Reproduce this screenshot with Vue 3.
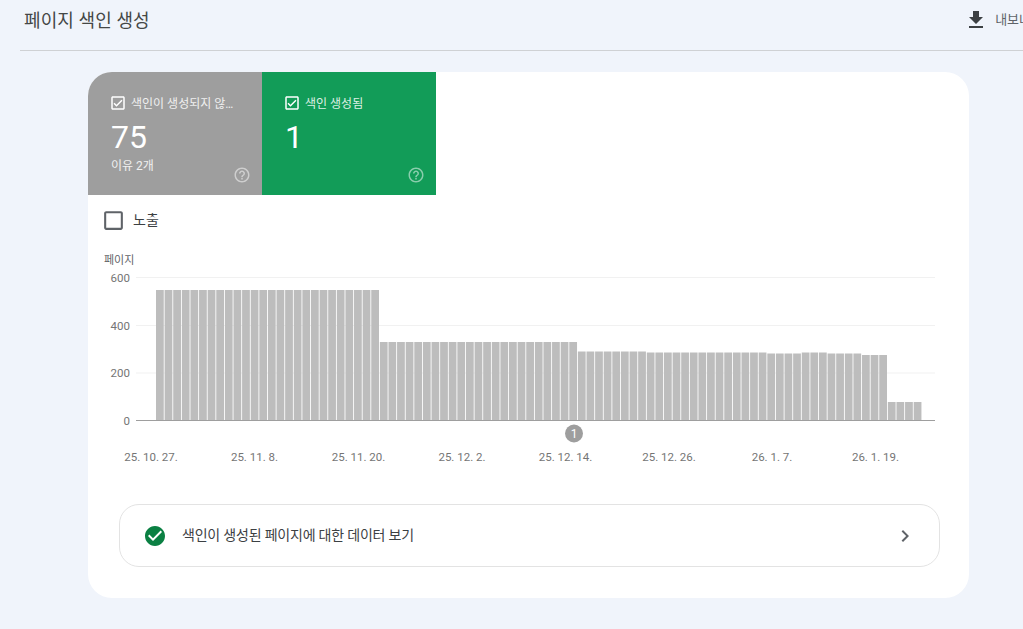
<template>
  <div class="page">
    <header class="page-header">
      <h1 class="page-title">페이지 색인 생성</h1>
      <button class="export-btn">
        <svg width="24" height="24" viewBox="0 0 24 24"><path d="M19 9h-4V3H9v6H5l7 7 7-7zM5 18v2h14v-2H5z" /></svg>
        <span>내보내기</span>
      </button>
    </header>

    <section class="card">
      <div class="tabs">
        <div v-for="tab in tabs" :key="tab.label" class="tab" :class="tab.kind">
          <div class="tab-label">
            <svg width="18" height="18" viewBox="0 0 24 24">
              <path d="M19 3H5c-1.11 0-2 .9-2 2v14c0 1.1.89 2 2 2h14c1.11 0 2-.9 2-2V5c0-1.1-.89-2-2-2zm0 16H5V5h14v14zM17.99 9l-1.41-1.42-6.59 6.59-2.58-2.57-1.42 1.41 4 3.99z" />
            </svg>
            <span class="tab-text">{{ tab.label }}</span>
          </div>
          <div class="tab-value">{{ tab.value }}</div>
          <div v-if="tab.sub" class="tab-sub">{{ tab.sub }}</div>
          <svg class="tab-help" width="18" height="18" viewBox="0 0 24 24">
            <path d="M11 18h2v-2h-2v2zm1-16C6.48 2 2 6.48 2 12s4.48 10 10 10 10-4.48 10-10S17.52 2 12 2zm0 18c-4.41 0-8-3.59-8-8s3.59-8 8-8 8 3.59 8 8-3.59 8-8 8zm0-14c-2.21 0-4 1.79-4 4h2c0-1.1.9-2 2-2s2 .9 2 2c0 2-3 1.75-3 5h2c0-2.25 3-2.5 3-5 0-2.21-1.79-4-4-4z" />
          </svg>
        </div>
      </div>

      <label class="metric">
        <svg width="25" height="25" viewBox="0 0 24 24">
          <path d="M19 5v14H5V5h14m0-2H5c-1.1 0-2 .9-2 2v14c0 1.1.9 2 2 2h14c1.1 0 2-.9 2-2V5c0-1.1-.9-2-2-2z" />
        </svg>
        <span>노출</span>
      </label>

      <svg class="chart" width="881" height="225" viewBox="0 0 881 225">
        <text x="16" y="18.5" class="unit">페이지</text>
        <g v-for="tick in ticks" :key="tick.label">
          <line x1="48" x2="847" :y1="tick.y" :y2="tick.y" class="grid" />
          <text x="42" :y="tick.y + 4" text-anchor="end" class="axis">{{ tick.label }}</text>
        </g>
        <rect
          v-for="bar in bars"
          :key="bar.x"
          :x="bar.x"
          :y="bar.y"
          width="7.75"
          :height="bar.h"
          class="bar"
        />
        <line x1="48" x2="847" y1="175.5" y2="175.5" class="baseline" />
        <circle cx="486" cy="188.5" r="9" class="marker" />
        <text x="486" y="193" text-anchor="middle" class="marker-text">1</text>
        <text v-for="d in dates" :key="d.label" :x="d.x" y="216" text-anchor="middle" class="axis">{{ d.label }}</text>
      </svg>

      <div class="detail-link">
        <svg class="ok-icon" width="24" height="24" viewBox="0 0 24 24">
          <path d="M12 2C6.48 2 2 6.48 2 12s4.48 10 10 10 10-4.48 10-10S17.52 2 12 2zm-2 15l-5-5 1.41-1.41L10 14.17l7.59-7.59L19 8l-9 9z" />
        </svg>
        <span class="detail-text">색인이 생성된 페이지에 대한 데이터 보기</span>
        <svg class="chevron" width="24" height="24" viewBox="0 0 24 24">
          <path d="M10 6L8.59 7.41 13.17 12l-4.58 4.59L10 18l6-6z" />
        </svg>
      </div>
    </section>
  </div>
</template>

<script setup>
const tabs = [
  { label: '색인이 생성되지 않음', value: '75', sub: '이유 2개', kind: 'gray' },
  { label: '색인 생성됨', value: '1', kind: 'green' },
]

const ticks = [
  { label: '600', y: 32.5 },
  { label: '400', y: 80.5 },
  { label: '200', y: 128 },
  { label: '0', y: 175.5 },
]

const dates = [
  { label: '25. 10. 27.', x: 63 },
  { label: '25. 11. 8.', x: 166.5 },
  { label: '25. 11. 20.', x: 270.5 },
  { label: '25. 12. 2.', x: 374 },
  { label: '25. 12. 14.', x: 477.5 },
  { label: '25. 12. 26.', x: 581 },
  { label: '26. 1. 7.', x: 684 },
  { label: '26. 1. 19.', x: 787.5 },
]

// [number of bars, bar height in px]
const segments = [
  [26, 130],
  [23, 78],
  [8, 68.5],
  [14, 67.5],
  [4, 66.5],
  [3, 67.5],
  [4, 66.5],
  [3, 65],
  [4, 18],
]

const bars = []
segments.forEach(([count, h]) => {
  for (let i = 0; i < count; i++) {
    bars.push({ x: 68 + bars.length * 8.61, y: 175 - h, h })
  }
})
</script>

<style scoped>
.page {
  width: 100%;
  height: 629px;
  overflow: hidden;
  background: #f0f4fb;
  font-family: Roboto, 'Noto Sans CJK KR', sans-serif;
  color: #3c4043;
}

/* Header */
.page-header {
  display: flex;
  align-items: center;
  justify-content: space-between;
  height: 40px;
  margin: 0 -20px 0 20px;
  padding: 0 0 10px 4px;
  border-bottom: 1px solid #cfd1d4;
}

.page-title {
  margin: 0 0 2px;
  font-size: 18px;
  font-weight: 400;
  letter-spacing: 0.1px;
  color: #444746;
}

.export-btn {
  display: flex;
  flex-shrink: 0;
  align-items: center;
  gap: 7px;
  padding: 0;
  border: none;
  background: none;
  font-family: inherit;
  font-size: 13px;
  color: #5f6368;
  white-space: nowrap;
}

.export-btn svg {
  fill: #3c4043;
}

.export-btn span {
  margin-bottom: 3px;
}

/* Card */
.card {
  width: 881px;
  height: 526px;
  margin: 21px 0 0 88px;
  background: #fff;
  border-radius: 24px;
  overflow: hidden;
}

/* Tabs */
.tabs {
  display: flex;
}

.tab {
  position: relative;
  width: 174px;
  height: 123px;
  box-sizing: border-box;
  padding: 22px 23px 0;
  color: #fff;
}

.tab.gray {
  background: #9e9e9e;
}

.tab.green {
  background: #129c58;
}

.tab-label {
  display: flex;
  align-items: center;
  gap: 4px;
  margin-left: -2px;
  height: 18px;
  font-size: 12px;
}

.tab-label svg {
  flex-shrink: 0;
  fill: #fff;
}

.tab-text {
  width: 103px;
  margin-bottom: 2px;
  white-space: nowrap;
  overflow: hidden;
  text-overflow: ellipsis;
  opacity: 0.85;
}

.tab-value {
  margin-top: 7px;
  height: 36px;
  line-height: 36px;
  font-size: 32px;
}

.tab-sub {
  margin-top: 3px;
  line-height: 16px;
  font-size: 12px;
  opacity: 0.85;
}

.tab-help {
  position: absolute;
  right: 11px;
  bottom: 11px;
  fill: #fff;
  opacity: 0.5;
}

/* Metric checkbox */
.metric {
  display: flex;
  align-items: center;
  gap: 7px;
  height: 24px;
  margin: 13px 0 0 13px;
  font-size: 14px;
  color: #3c4043;
}

.metric svg {
  fill: #5f6368;
}

.metric span {
  margin-bottom: 2px;
}

/* Chart */
.chart {
  display: block;
  margin-top: 13px;
}

.unit {
  font-size: 11px;
  fill: #5f6368;
}

.axis {
  font-size: 11.5px;
  fill: #757575;
}

.grid {
  stroke: #f1f1f1;
  stroke-width: 1;
}

.baseline {
  stroke: #9e9e9e;
  stroke-width: 1;
}

.bar {
  fill: #bdbdbd;
}

.marker {
  fill: #9e9e9e;
}

.marker-text {
  font-size: 12px;
  fill: #fff;
}

/* Detail link */
.detail-link {
  display: flex;
  align-items: center;
  width: 821px;
  height: 63px;
  box-sizing: border-box;
  margin: 34px 0 0 31px;
  padding: 0 22px 0 23px;
  border: 1px solid #e3e3e3;
  border-radius: 20px;
}

.ok-icon {
  fill: #0b8043;
}

.detail-text {
  flex: 1;
  margin-left: 15px;
  margin-bottom: 3px;
  font-size: 14px;
  letter-spacing: -0.2px;
  color: #3c4043;
}

.chevron {
  fill: #5f6368;
}
</style>

<style>
html,
body {
  margin: 0;
  overflow: hidden;
}
</style>
